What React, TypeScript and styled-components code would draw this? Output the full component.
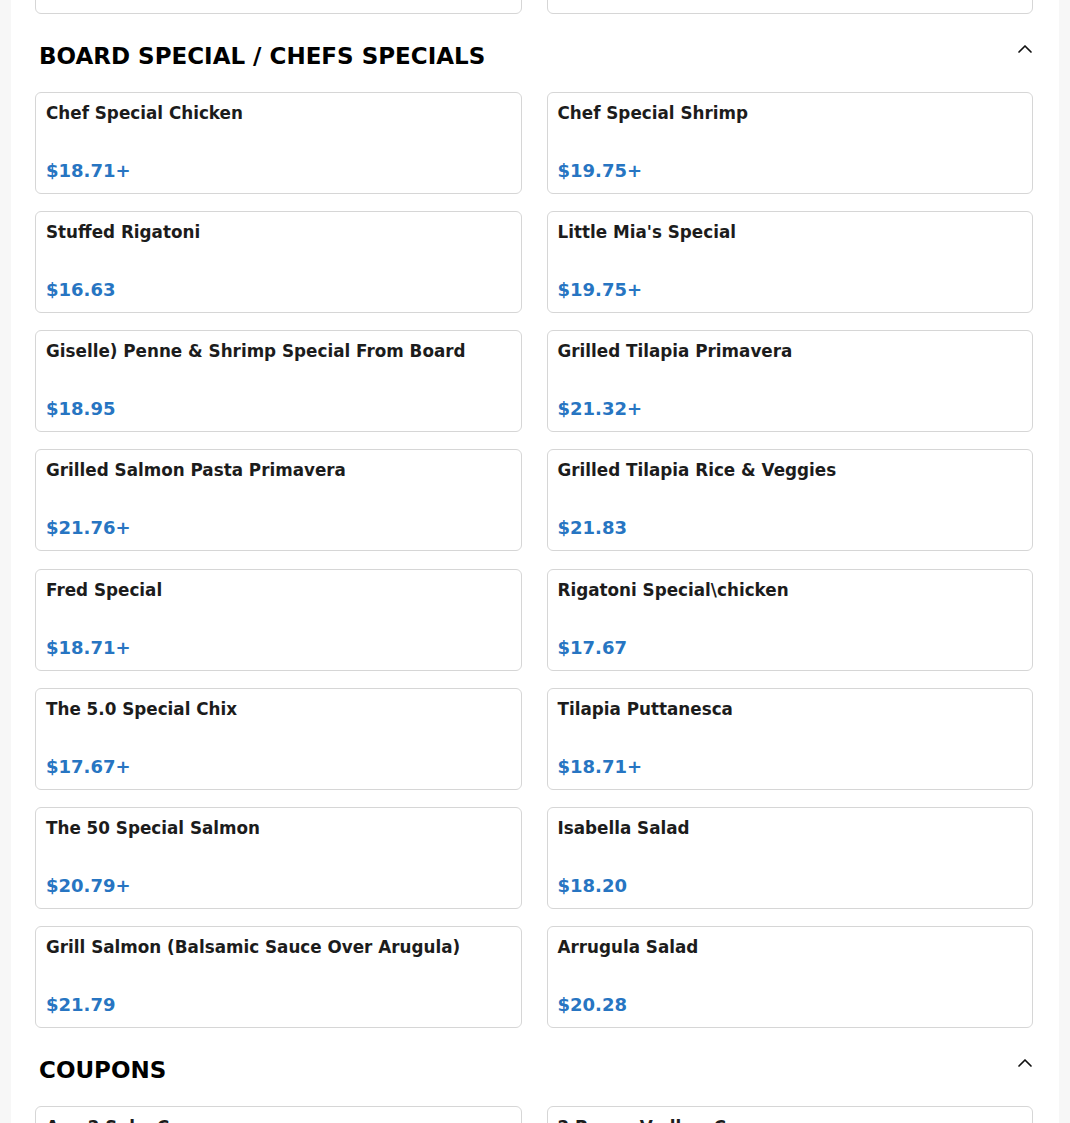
import styled, { createGlobalStyle } from "styled-components";

interface MenuItem {
  name: string;
  price: string;
}

interface Section {
  title: string;
  items: MenuItem[];
}

// last row of the section above, scrolled mostly out of view
const PREVIOUS: MenuItem[] = [
  { name: "Chicken Parmigiana Sub", price: "$14.55" },
  { name: "Garlic Knots", price: "$9.88" },
];

const SECTIONS: Section[] = [
  {
    title: "BOARD SPECIAL / CHEFS SPECIALS",
    items: [
      { name: "Chef Special Chicken", price: "$18.71+" },
      { name: "Chef Special Shrimp", price: "$19.75+" },
      { name: "Stuffed Rigatoni", price: "$16.63" },
      { name: "Little Mia's Special", price: "$19.75+" },
      { name: "Giselle) Penne & Shrimp Special From Board", price: "$18.95" },
      { name: "Grilled Tilapia Primavera", price: "$21.32+" },
      { name: "Grilled Salmon Pasta Primavera", price: "$21.76+" },
      { name: "Grilled Tilapia Rice & Veggies", price: "$21.83" },
      { name: "Fred Special", price: "$18.71+" },
      { name: "Rigatoni Special\\chicken", price: "$17.67" },
      { name: "The 5.0 Special Chix", price: "$17.67+" },
      { name: "Tilapia Puttanesca", price: "$18.71+" },
      { name: "The 50 Special Salmon", price: "$20.79+" },
      { name: "Isabella Salad", price: "$18.20" },
      { name: "Grill Salmon (Balsamic Sauce Over Arugula)", price: "$21.79" },
      { name: "Arrugula Salad", price: "$20.28" },
    ],
  },
  {
    title: "COUPONS",
    items: [
      { name: "Any 2 Subs Coupon", price: "$24.99" },
      { name: "2 Penne Vodkas Coupon", price: "$29.99" },
    ],
  },
];

function ChevronUp() {
  return (
    <svg width="16" height="16" viewBox="0 0 16 16" fill="none">
      <path
        d="M2 11 L8 5 L14 11"
        stroke="#111"
        strokeWidth="1.7"
        strokeLinecap="round"
        strokeLinejoin="round"
      />
    </svg>
  );
}

function ItemCard({ item }: { item: MenuItem }) {
  return (
    <Card>
      <ItemName>{item.name}</ItemName>
      <Price>{item.price}</Price>
    </Card>
  );
}

export default function App() {
  return (
    <>
      <GlobalStyle />
      <Page>
        <Panel>
          <Grid $offset>
            {PREVIOUS.map((item) => (
              <ItemCard key={item.name} item={item} />
            ))}
          </Grid>
          {SECTIONS.map((section) => (
            <div key={section.title}>
              <SectionHeader>
                <SectionTitle>{section.title}</SectionTitle>
                <Toggle>
                  <ChevronUp />
                </Toggle>
              </SectionHeader>
              <Grid>
                {section.items.map((item) => (
                  <ItemCard key={item.name} item={item} />
                ))}
              </Grid>
            </div>
          ))}
        </Panel>
      </Page>
    </>
  );
}

const GlobalStyle = createGlobalStyle`
  html, body {
    margin: 0;
    padding: 0;
    background: #f7f7f7;
    font-family: "DejaVu Sans", Verdana, sans-serif;
    overflow: hidden;
  }
`;

const Page = styled.div`
  height: 1123px;
  overflow: hidden;
  padding: 0 11px;
`;

const Panel = styled.div`
  min-height: 1400px;
  padding: 0 26px 40px 24px;
  background: #ffffff;
`;

const Grid = styled.div<{ $offset?: boolean }>`
  display: grid;
  grid-template-columns: 1fr 1fr;
  column-gap: 25px;
  row-gap: 17.15px;
  margin-top: ${({ $offset }) => ($offset ? "-88px" : "0")};
`;

const SectionHeader = styled.div`
  display: flex;
  align-items: flex-start;
  justify-content: space-between;
  margin: 24px 0 18px;
  padding-left: 4px;
`;

const SectionTitle = styled.h2`
  margin: 0;
  font-size: 23px;
  line-height: 36px;
  font-weight: 700;
  color: #000;
`;

const Toggle = styled.div`
  display: flex;
  width: 16px;
  height: 16px;
  margin-top: 3px;
`;

const Card = styled.div`
  display: flex;
  flex-direction: column;
  justify-content: space-between;
  box-sizing: border-box;
  height: 102px;
  padding: 10px 10px 10px;
  border: 1px solid #d6d6d6;
  border-radius: 6px;
  background: #fff;
`;

const ItemName = styled.div`
  font-size: 16.8px;
  line-height: 21px;
  font-weight: 700;
  color: #1c1c1c;
`;

const Price = styled.div`
  font-size: 18px;
  line-height: 24px;
  font-weight: 700;
  color: #2775c2;
`;
